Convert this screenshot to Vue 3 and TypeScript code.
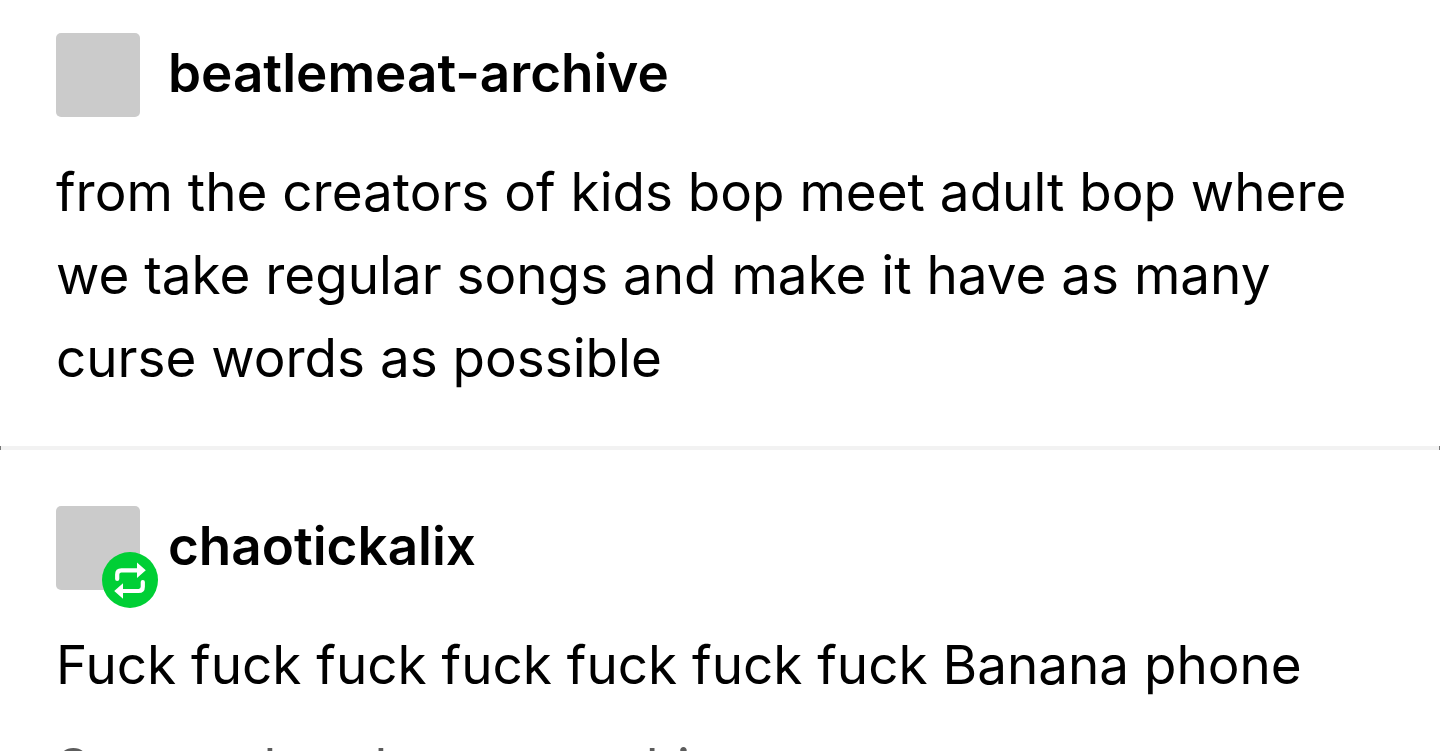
<script setup lang="ts">
interface Post {
  name: string
  reblog: boolean
  text: string
  source?: string
}

const posts: Post[] = [
  {
    name: 'beatlemeat-archive',
    reblog: false,
    text: 'from the creators of kids bop meet adult bop where we take regular songs and make it have as many curse words as possible',
  },
  {
    name: 'chaotickalix',
    reblog: true,
    text: 'Fuck fuck fuck fuck fuck fuck fuck Banana phone',
    source: 'Source: beatlemeat-archive',
  },
]
</script>

<template>
  <main class="feed">
    <template v-for="(post, index) in posts" :key="post.name">
      <hr v-if="index > 0" class="divider" />
      <article class="post">
        <header class="head">
          <div class="avatar">
            <svg v-if="post.reblog" class="badge" viewBox="0 0 56 56" aria-hidden="true">
              <circle cx="28" cy="28" r="28" fill="#00cf35" />
              <g fill="none" stroke="#fff" stroke-width="4.2" stroke-linecap="round">
                <path d="M15.2 27v-4.5q0-4.2 4.2-4.2H36" />
                <path d="M40.8 30v4.8q0 4.2-4.2 4.2H20" />
              </g>
              <path d="M35 10.5l8.8 7.8-8.8 7.8zM21 31.2L12.2 39l8.8 7.8z" fill="#fff" />
            </svg>
          </div>
          <a class="name" href="#">{{ post.name }}</a>
        </header>
        <p class="body">{{ post.text }}</p>
        <p v-if="post.source" class="source">{{ post.source }}</p>
      </article>
    </template>
  </main>
</template>

<style>
body {
  margin: 0;
  background: #fff;
  overflow: hidden;
}
</style>

<style scoped>
.feed {
  height: 100vh;
  overflow: hidden;
  font-family: Inter, "Liberation Sans", sans-serif;
  font-size: 53px;
  color: #000;
}
.post {
  padding: 33px 56px 46px;
}
.divider {
  height: 4px;
  margin: 0;
  border: solid #777;
  border-width: 0 1px;
  background: #f2f2f2;
}
.divider + .post {
  padding-top: 56px;
}
.head {
  display: flex;
  align-items: flex-start;
  gap: 28px;
}
.avatar {
  position: relative;
  width: 84px;
  height: 84px;
  border-radius: 5px;
  background: #cbcbcb;
}
.badge {
  position: absolute;
  right: -18px;
  bottom: -18px;
  width: 56px;
  height: 56px;
}
.name {
  color: inherit;
  font-weight: 600;
  line-height: 80px;
  text-decoration: none;
}
.body {
  margin: 34px 0 0;
  line-height: 83px;
}
.source {
  margin: 20px 0 0;
  color: #5c5c5c;
  line-height: 83px;
}
</style>
